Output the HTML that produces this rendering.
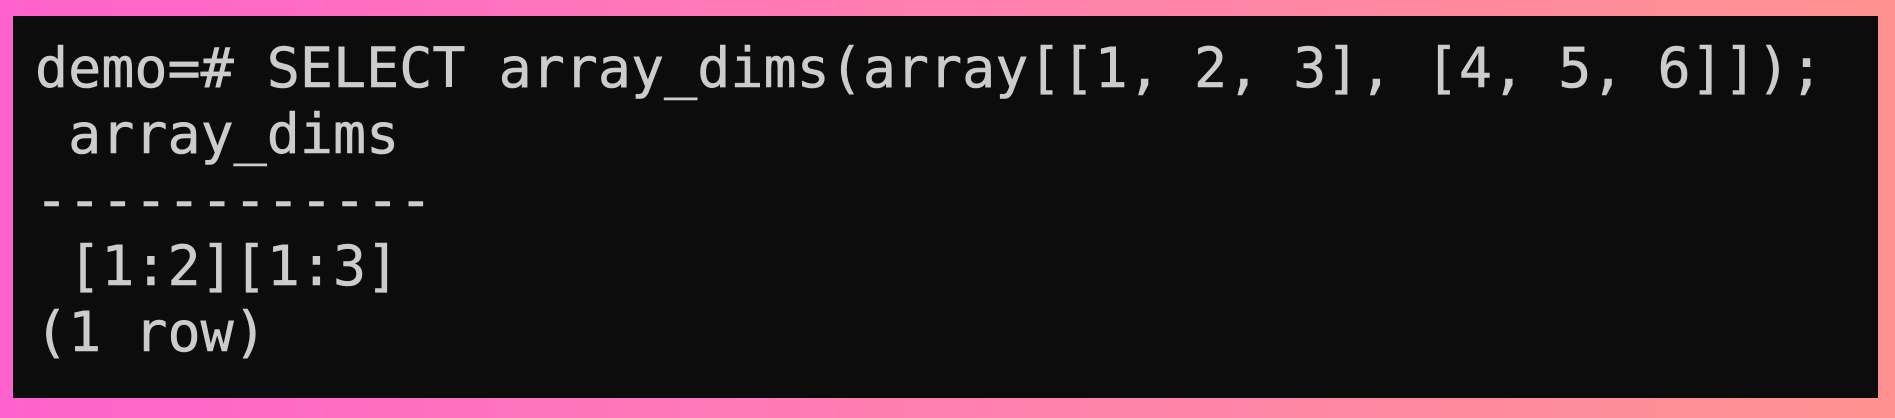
<!DOCTYPE html>
<html><head><meta charset="utf-8"><style>
html,body{margin:0;padding:0;}
body{width:1895px;height:418px;background:linear-gradient(90deg,#ff62cc 0%,#ff80b0 50%,#ff9290 100%);position:relative;overflow:hidden;}
.term{position:absolute;left:13px;top:16px;width:1865px;height:382px;background:#0c0c0c;}
pre{position:absolute;left:22px;top:19px;margin:0;font-family:"DejaVu Sans Mono","Liberation Mono",monospace;font-size:55px;line-height:66px;color:#cccccc;-webkit-text-stroke:0.6px #cccccc;}
</style></head><body>
<div class="term"><pre>demo=# SELECT array_dims(array[[1, 2, 3], [4, 5, 6]]);
 array_dims
------------
 [1:2][1:3]
(1 row)</pre></div>
</body></html>
